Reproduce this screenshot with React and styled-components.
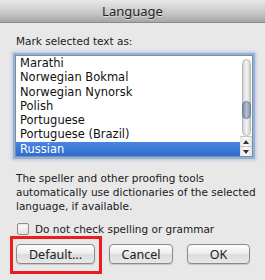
import styled, { createGlobalStyle } from "styled-components";

const GlobalStyle = createGlobalStyle`
  html, body {
    margin: 0;
    padding: 0;
    background: #e8e8e8;
  }
  body {
    font-family: "DejaVu Sans", "Noto Sans", sans-serif;
    -webkit-font-smoothing: antialiased;
  }
`;

const Dialog = styled.div`
  width: 265px;
  height: 280px;
  background: #e8e8e8;
  display: flex;
  flex-direction: column;
  overflow: hidden;
`;

const TitleBar = styled.div`
  height: 22px;
  flex: none;
  display: flex;
  align-items: center;
  justify-content: center;
  background: linear-gradient(#e9e9e9, #c6c6c6 60%, #a6a6a6);
  border-bottom: 1px solid #8a8a8a;
  font-family: "Noto Sans", sans-serif;
  font-size: 13px;
  color: #222;
  text-shadow: 0 1px 0 rgba(255, 255, 255, 0.5);
`;

const Body = styled.div`
  padding: 11px 0 0 16px;
  display: flex;
  flex-direction: column;
  font-size: 10.5px;
  color: #1a1a1a;
`;

const Label = styled.div`
  height: 14px;
  line-height: 14px;
`;

const ListFrame = styled.div`
  margin: 7px 0 0 -1px;
  width: 236px;
  height: 100px;
  border: 1px solid #8c8c8c;
  box-shadow: 0 0 0 2px #8fb2e2, 0 0 3px 3px rgba(110, 150, 220, 0.45);
  background: #fff;
  display: flex;
`;

const Rows = styled.div`
  flex: 1;
  display: flex;
  flex-direction: column;
  font-size: 11.5px;
`;

const Row = styled.div`
  height: 14.3px;
  line-height: 14px;
  padding-left: 4px;
  white-space: nowrap;
  background: ${(p) => (p.$selected ? "linear-gradient(#4a86de, #2f6bcf)" : "transparent")};
  color: ${(p) => (p.$selected ? "#fff" : "#111")};
`;

const Scrollbar = styled.div`
  width: 12px;
  flex: none;
  background: #fff;
  display: flex;
  flex-direction: column;
  align-items: center;
  padding-top: 3px;
`;

const Track = styled.div`
  width: 9px;
  flex: 1;
  border-radius: 5px;
  background: linear-gradient(90deg, #d4d4d4, #f2f2f2 50%, #d4d4d4);
  border: 1px solid #b8b8b8;
  box-sizing: border-box;
  display: flex;
  flex-direction: column;
  padding-top: 41px;
`;

const Thumb = styled.div`
  height: 16px;
  margin: 0 -1px;
  border-radius: 5px;
  background: linear-gradient(90deg, #7d8ea6, #b4c1d3 50%, #8a9ab0);
  border: 1px solid #6e7c90;
`;

const Arrow = styled.div`
  width: 12px;
  height: 9px;
  flex: none;
  display: flex;
  align-items: center;
  justify-content: center;
  background: linear-gradient(90deg, #e4e4e4, #fafafa 50%, #e4e4e4);
  border-top: 1px solid #c8c8c8;
`;

const Description = styled.p`
  margin: 14px 0 0 0;
  line-height: 14px;
  width: 240px;
`;

const CheckRow = styled.label`
  margin-top: 9px;
  display: flex;
  align-items: center;
  gap: 6px;
  height: 14px;
`;

const Check = styled.span`
  width: 10px;
  height: 10px;
  border: 1px solid #8e8e8e;
  border-radius: 2px;
  background: linear-gradient(#fdfdfd, #e4e4e4);
  box-shadow: inset 0 1px 1px rgba(0, 0, 0, 0.08);
  margin-left: 1px;
`;

const Buttons = styled.div`
  margin-top: 8px;
  display: flex;
  gap: 14px;
`;

const Highlight = styled.div`
  position: relative;
`;

const RedBox = styled.div`
  position: absolute;
  left: -6px;
  top: -8px;
  width: 86px;
  height: 32px;
  border: 3px solid #ee1c1c;
`;

const Button = styled.button`
  width: ${(p) => p.$w}px;
  height: 20px;
  border: 1px solid #8a8a8a;
  border-radius: 4px;
  background: linear-gradient(#fefefe, #ececec 50%, #dcdcdc 51%, #e8e8e8);
  box-shadow: 0 1px 1px rgba(0, 0, 0, 0.15);
  font-family: "Noto Sans", sans-serif;
  font-size: 12.5px;
  color: #222;
  padding: 0;
`;

const languages = [
  "Marathi",
  "Norwegian Bokmal",
  "Norwegian Nynorsk",
  "Polish",
  "Portuguese",
  "Portuguese (Brazil)",
  "Russian"
];

const App = () => {
  return (
    <Dialog>
      <GlobalStyle />
      <TitleBar>Language</TitleBar>
      <Body>
        <Label>Mark selected text as:</Label>
        <ListFrame>
          <Rows>
            {languages.map((lang) => (
              <Row key={lang} $selected={lang === "Russian"}>
                {lang}
              </Row>
            ))}
          </Rows>
          <Scrollbar>
            <Track>
              <Thumb />
            </Track>
            <Arrow>
              <svg width="6" height="4" viewBox="0 0 6 4">
                <path d="M3 0 L6 4 L0 4 Z" fill="#333" />
              </svg>
            </Arrow>
            <Arrow>
              <svg width="6" height="4" viewBox="0 0 6 4">
                <path d="M0 0 L6 0 L3 4 Z" fill="#333" />
              </svg>
            </Arrow>
          </Scrollbar>
        </ListFrame>
        <Description>
          The speller and other proofing tools automatically use dictionaries of
          the selected language, if available.
        </Description>
        <CheckRow>
          <Check />
          Do not check spelling or grammar
        </CheckRow>
        <Buttons>
          <Highlight>
            <RedBox />
            <Button $w={79}>Default...</Button>
          </Highlight>
          <Button $w={64}>Cancel</Button>
          <Button $w={63}>OK</Button>
        </Buttons>
      </Body>
    </Dialog>
  );
};

export default App;
